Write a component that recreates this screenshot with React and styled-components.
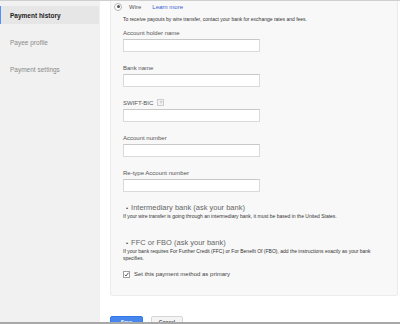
import React from 'react';
import styled, { createGlobalStyle } from 'styled-components';

const GlobalStyle = createGlobalStyle`
  html, body {
    margin: 0;
    padding: 0;
    background: #fff;
  }
  body {
    font-family: "Liberation Sans", Arial, sans-serif;
  }
`;

const Frame = styled.div`
  width: 400px;
  height: 324px;
  box-sizing: border-box;
  border-top: 1px solid #cfcfcf;
  border-bottom: 2px solid #a8a8a8;
  overflow: hidden;
  display: flex;
`;

const Sidebar = styled.nav`
  width: 100px;
  flex: none;
  background: #f1f1f1;
  padding-top: 5px;
  display: flex;
  flex-direction: column;
  gap: 9px;
`;

const NavItem = styled.div`
  height: 18px;
  display: flex;
  align-items: center;
  padding-left: 9px;
  margin-right: 1px;
  font-size: 6.5px;
  color: ${(p) => (p.$active ? '#222' : '#8a8a8a')};
  font-weight: ${(p) => (p.$active ? 'bold' : 'normal')};
  background: ${(p) => (p.$active ? '#e6e6e6' : 'transparent')};
  border-left: 1px solid ${(p) => (p.$active ? '#4d90fe' : 'transparent')};
`;

const Main = styled.main`
  flex: 1;
  padding: 0 2px 0 10px;
  display: flex;
  flex-direction: column;
`;

const Panel = styled.section`
  background: #f8f8f8;
  border: 1px solid #ececec;
  border-top: none;
  border-radius: 0 0 3px 3px;
  padding: 1px 12px 17px 12px;
  color: #333;
`;

const WireRow = styled.div`
  display: flex;
  align-items: center;
  height: 9px;
  margin-left: -9px;
  font-size: 6px;
  gap: 7px;
`;

const Radio = styled.span`
  width: 6px;
  height: 6px;
  border: 1px solid #b5b5b5;
  border-radius: 50%;
  background: #fff;
  display: flex;
  align-items: center;
  justify-content: center;
  &::after {
    content: '';
    width: 3px;
    height: 3px;
    border-radius: 50%;
    background: #555;
  }
`;

const WireLabel = styled.span`
  color: #555;
  margin-right: 4px;
`;

const Link = styled.a`
  color: #3b5fd0;
  text-decoration: none;
`;

const Note = styled.p`
  margin: ${(p) => p.$top || 0}px 0 0;
  font-size: 5px;
  line-height: 6.5px;
  color: #333;
`;

const Field = styled.div`
  margin-top: ${(p) => p.$top}px;
  display: flex;
  flex-direction: column;
`;

const Label = styled.label`
  font-size: 6px;
  line-height: 8px;
  color: #555;
  display: flex;
  align-items: center;
  gap: 4px;
`;

const Help = styled.span`
  width: 5px;
  height: 5px;
  border: 1px solid #ccc;
  background: #f2f2f2;
  color: #888;
  font-size: 4px;
  line-height: 5px;
  text-align: center;
`;

const Input = styled.input`
  margin-top: 2px;
  width: 137px;
  height: 13px;
  box-sizing: border-box;
  border: 1px solid #dadada;
  border-top-color: #c8c8c8;
  background: #fff;
  padding: 0 3px;
  outline: none;
`;

const Heading = styled.div`
  margin-top: ${(p) => p.$top}px;
  font-size: 7.5px;
  line-height: 9px;
  color: #666;
  padding-left: 3px;
  &::before {
    content: '•';
    margin-right: 3px;
    font-size: 6px;
    color: #444;
  }
`;

const CheckRow = styled.div`
  margin-top: 9px;
  display: flex;
  align-items: center;
  gap: 4px;
  font-size: 6px;
  line-height: 8px;
  color: #444;
`;

const Check = styled.span`
  width: 5px;
  height: 5px;
  border: 1px solid #a0a0a0;
  background: #fff;
  display: flex;
  align-items: center;
  justify-content: center;
`;

const Actions = styled.div`
  margin-top: 20px;
  display: flex;
  gap: 8px;
`;

const Button = styled.button`
  width: ${(p) => (p.$primary ? 33 : 32)}px;
  height: 12px;
  box-sizing: border-box;
  padding: 0;
  font-family: inherit;
  font-size: 5px;
  font-weight: bold;
  border-radius: 2px;
  border: 1px solid ${(p) => (p.$primary ? '#3079ed' : '#d6d6d6')};
  background: ${(p) => (p.$primary ? '#4787ed' : '#f4f4f4')};
  color: ${(p) => (p.$primary ? '#fff' : '#555')};
`;

const fields = [
  { label: 'Account holder name', top: 6 },
  { label: 'Bank name', top: 12 },
  { label: 'SWIFT-BIC', top: 12, help: true },
  { label: 'Account number', top: 12 },
  { label: 'Re-type Account number', top: 12 },
];

export default function App() {
  return (
    <>
      <GlobalStyle />
      <Frame>
        <Sidebar>
          <NavItem $active>Payment history</NavItem>
          <NavItem>Payee profile</NavItem>
          <NavItem>Payment settings</NavItem>
        </Sidebar>
        <Main>
          <Panel>
            <WireRow>
              <Radio />
              <WireLabel>Wire</WireLabel>
              <Link href="#">Learn more</Link>
            </WireRow>
            <Note $top={5}>
              To receive payouts by wire transfer, contact your bank for exchange rates and fees.
            </Note>
            {fields.map((f) => (
              <Field key={f.label} $top={f.top}>
                <Label>
                  {f.label}
                  {f.help && <Help>?</Help>}
                </Label>
                <Input type="text" />
              </Field>
            ))}
            <Heading $top={11}>Intermediary bank (ask your bank)</Heading>
            <Note>
              If your wire transfer is going through an intermediary bank, it must be based in the United States.
            </Note>
            <Heading $top={19}>FFC or FBO (ask your bank)</Heading>
            <Note>
              If your bank requires For Further Credit (FFC) or For Benefit Of (FBO), add the instructions exactly as your bank specifies.
            </Note>
            <CheckRow>
              <Check>
                <svg width="5" height="5" viewBox="0 0 10 10">
                  <path d="M1.5 5.5 L4 8 L9 1.5" fill="none" stroke="#333" strokeWidth="1.6" />
                </svg>
              </Check>
              Set this payment method as primary
            </CheckRow>
          </Panel>
          <Actions>
            <Button $primary>Save</Button>
            <Button>Cancel</Button>
          </Actions>
        </Main>
      </Frame>
    </>
  );
}
